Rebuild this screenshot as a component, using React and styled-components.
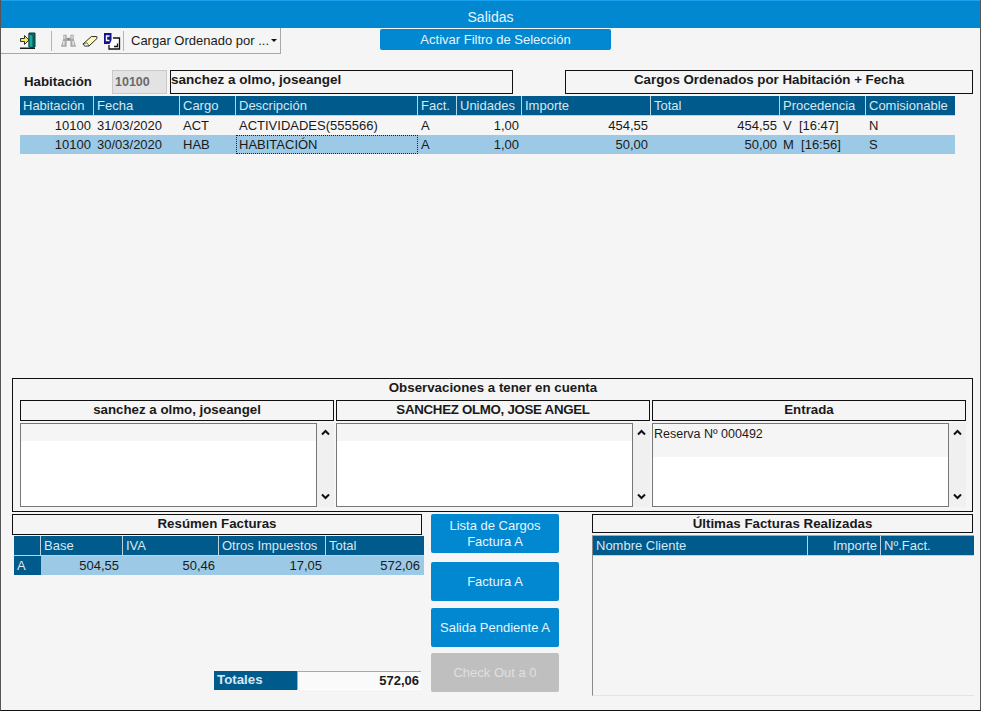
import React from "react";
import styled, { createGlobalStyle } from "styled-components";

const GlobalStyle = createGlobalStyle`
  html, body {
    margin: 0;
    padding: 0;
    background: #f5f5f5;
  }
  * {
    box-sizing: border-box;
  }
`;

const Window = styled.div`
  width: 981px;
  height: 711px;
  display: flex;
  flex-direction: column;
  background: #f5f5f5;
  border-left: 1px solid #555;
  border-right: 1px solid #555;
  border-bottom: 1px solid #111;
  font-family: "Liberation Sans", Arial, sans-serif;
  font-size: 13px;
  color: #1a1a1a;
  overflow: hidden;
`;

const TitleBar = styled.div`
  flex: none;
  height: 28px;
  margin: 0 -1px;
  padding-top: 8px;
  background: #0288d1;
  border-top: 1px solid #19a3f0;
  color: #e8f4fb;
  font-size: 14px;
  line-height: 17px;
  text-align: center;
`;

const TopRow = styled.div`
  flex: none;
  height: 42px;
  display: flex;
  align-items: flex-start;
`;

const Toolbar = styled.div`
  width: 280px;
  height: 26px;
  display: flex;
  align-items: center;
  padding-left: 18px;
  border-right: 1px solid #a8a8a8;
  border-bottom: 1px solid #a8a8a8;
`;

const ToolIcon = styled.svg`
  flex: none;
  width: ${(p) => p.$w || 18}px;
  height: 18px;
  margin-left: ${(p) => p.$gap || 0}px;
`;

const ToolSep = styled.div`
  flex: none;
  width: 1px;
  height: 20px;
  margin-left: ${(p) => p.$gap}px;
  background: #b4b4b4;
`;

const LoadMenu = styled.div`
  display: flex;
  align-items: center;
  margin-left: 7px;
  white-space: nowrap;
`;

const Caret = styled.span`
  width: 0;
  height: 0;
  margin-left: 2px;
  border-left: 3px solid transparent;
  border-right: 3px solid transparent;
  border-top: 3px solid #111;
`;

const FilterButton = styled.div`
  width: 231px;
  height: 21px;
  margin: 1px 0 0 99px;
  display: flex;
  align-items: center;
  justify-content: center;
  border-radius: 2px;
  background: #0288d1;
  color: #e8f4fb;
  font-size: 13px;
`;

const InfoRow = styled.div`
  flex: none;
  height: 26px;
  display: flex;
  align-items: flex-start;
  padding-left: 23px;
`;

const RoomLabel = styled.div`
  width: 88px;
  height: 24px;
  line-height: 24px;
  font-weight: bold;
  font-size: 13.3px;
`;

const RoomInput = styled.div`
  width: 55px;
  height: 24px;
  line-height: 22px;
  padding-left: 2px;
  background: #e3e3e3;
  border: 1px solid #c9c9c9;
  color: #6a6a6a;
  font-size: 12.5px;
  font-weight: bold;
`;

const NameBox = styled.div`
  width: 343px;
  height: 24px;
  margin-left: 3px;
  line-height: 18px;
  border: 1px solid #111;
  font-weight: bold;
  font-size: 13.5px;
`;

const OrderBox = styled.div`
  width: 408px;
  height: 24px;
  margin-left: 52px;
  line-height: 18px;
  border: 1px solid #111;
  font-weight: bold;
  font-size: 13.3px;
  text-align: center;
`;

const Grid = styled.div`
  flex: none;
  display: grid;
  grid-template-columns: ${(p) => p.$cols};
  align-content: start;
  width: ${(p) => p.$width}px;
  margin-left: ${(p) => p.$left || 0}px;
`;

const HeadCell = styled.div`
  height: 20px;
  line-height: 20px;
  padding: 0 3px;
  background: #005a8c;
  color: #d7e8f2;
  border-right: ${(p) => (p.$last ? "none" : "1px solid #b9d3e2")};
  border-bottom: 1px solid #b9d3e2;
  text-align: ${(p) => (p.$right ? "right" : "left")};
  white-space: nowrap;
  overflow: hidden;
`;

const Cell = styled.div`
  height: 19px;
  line-height: 19px;
  padding: 0 3px;
  background: ${(p) => (p.$selected ? "#9ccae6" : "transparent")};
  text-align: ${(p) => (p.$right ? "right" : "left")};
  white-space: pre;
  overflow: hidden;
  outline: ${(p) => (p.$focus ? "1px dotted #222" : "none")};
  outline-offset: -1px;
`;

const Spacer = styled.div`
  flex: none;
  height: 224px;
`;

const ObsPanel = styled.div`
  flex: none;
  height: 134px;
  margin: 0 7px 0 11px;
  padding: 0 6px 0 7px;
  border: 1px solid #111;
  display: flex;
  flex-direction: column;
`;

const ObsTitle = styled.div`
  height: 21px;
  line-height: 18px;
  text-align: center;
  font-weight: bold;
  font-size: 13.3px;
`;

const ObsColumns = styled.div`
  display: grid;
  grid-template-columns: 314px 314px 314px;
  column-gap: 2px;
`;

const SectionHead = styled.div`
  height: 21px;
  line-height: 18px;
  border: 1px solid #111;
  text-align: center;
  font-weight: bold;
  font-size: 13.3px;
  letter-spacing: ${(p) => (p.$tight ? "-0.3px" : "normal")};
`;

const MemoRow = styled.div`
  display: flex;
  height: 84px;
  margin-top: 2px;
`;

const Memo = styled.div`
  flex: 1;
  background: linear-gradient(#f5f5f5 ${(p) => p.$band}px, #fff ${(p) => p.$band}px);
  border: 1px solid #777;
  padding: 2px 1px;
  line-height: 16px;
  font-size: 12.5px;
`;

const ScrollBar = styled.div`
  flex: none;
  width: 17px;
  display: flex;
  flex-direction: column;
  justify-content: space-between;
  align-items: center;
  padding: 6px 0 7px;
  background: #f0f0f0;
`;

const Chevron = styled.svg`
  width: 9px;
  height: 7px;
`;

const BottomRow = styled.div`
  flex: 1;
  display: flex;
  margin-top: 2px;
  min-height: 0;
  padding-left: 11px;
`;

const SummaryColumn = styled.div`
  flex: none;
  width: 412px;
  display: flex;
  flex-direction: column;
`;

const SummaryHead = styled(SectionHead)`
  width: 410px;
  margin-bottom: 1px;
`;

const SideCell = styled(Cell)`
  background: #005a8c;
  color: #d7e8f2;
`;

const SummaryCell = styled(Cell)`
  padding-right: 4px;
`;

const TotalsRow = styled.div`
  display: flex;
  height: 19px;
  margin: 96px 0 0 202px;
`;

const TotalsLabel = styled.div`
  width: 83px;
  padding-left: 3px;
  line-height: 18px;
  background: #005a8c;
  color: #d7e8f2;
  font-weight: bold;
  font-size: 13.3px;
`;

const TotalsValue = styled.div`
  width: 124px;
  padding-right: 2px;
  line-height: 17px;
  background: #fafafa;
  border-top: 1px solid #a8a8a8;
  border-left: 1px solid #a8a8a8;
  border-bottom: 1px solid #fff;
  text-align: right;
  font-weight: bold;
`;

const ActionColumn = styled.div`
  flex: none;
  width: 128px;
  margin-left: 7px;
  display: flex;
  flex-direction: column;
`;

const ActionButton = styled.div`
  height: 39px;
  margin-top: ${(p) => p.$gap || 0}px;
  display: flex;
  align-items: center;
  justify-content: center;
  text-align: center;
  line-height: 16px;
  border-radius: 2px;
  background: ${(p) => (p.$disabled ? "#bfbfbf" : "#0288d1")};
  color: ${(p) => (p.$disabled ? "#e0e0e0" : "#e8f4fb")};
`;

const InvoiceColumn = styled.div`
  flex: none;
  width: 382px;
  margin-left: 33px;
  display: flex;
  flex-direction: column;
`;

const InvoiceHead = styled(SectionHead)`
  width: 381px;
  height: 19px;
  line-height: 17px;
  margin-bottom: 2px;
`;

const InvoiceBody = styled.div`
  width: 382px;
  height: 161px;
  border-left: 1px solid #8a8a8a;
  border-bottom: 1px solid #e4e4e4;
  border-top: 1px solid #aaa;
`;

const chargeCols = "74px 86px 56px 182px 39px 65px 129px 129px 86px 89px";
const chargeHeads = ["Habitación", "Fecha", "Cargo", "Descripción", "Fact.", "Unidades", "Importe", "Total", "Procedencia", "Comisionable"];
const chargeRows = [
  ["10100", "31/03/2020", "ACT", "ACTIVIDADES(555566)", "A", "1,00", "454,55", "454,55", "V  [16:47]", "N"],
  ["10100", "30/03/2020", "HAB", "HABITACIÓN", "A", "1,00", "50,00", "50,00", "M  [16:56]", "S"],
];
const rightCols = [0, 5, 6, 7];

const DoorIcon = () => (
  <ToolIcon viewBox="0 0 18 18" $w={18}>
    <path d="M10 1h6v14h-6z" fill="#0b6f6c" stroke="#063a3a" />
    <path d="M10 1.500l4 2V16l-4-1.500z" fill="#15aaa4" stroke="#063a3a" strokeWidth=".8" />
    <path d="M1.500 6.500h4V3.500l4.500 4.500-4.500 4.500v-3h-4z" fill="#ffec4f" stroke="#1c1c1c" strokeWidth=".9" />
    <path d="M1 15.500h15V17H1z" fill="#1c1c1c" />
  </ToolIcon>
);

const BinocularsIcon = () => (
  <ToolIcon viewBox="0 0 18 18" $w={17} $gap={8}>
    <path d="M3.500 2.500h3.500v3h4v-3h3.500v4l2.500 8.500h-6v-6H7v6H1l2.500-8.500z" fill="#a8a8a8" />
    <path d="M4 3.500h1.500v3H4zM12 3.500h1.500v3H12zM3 9h2v4.500H3zM13 9h2v4.500h-2z" fill="#dedede" />
    <path d="M8 6h2v2H8z" fill="#7d7d7d" />
  </ToolIcon>
);

const EraserIcon = () => (
  <ToolIcon viewBox="0 0 18 18" $w={16} $gap={5}>
    <path d="M1 12.500L10.500 4H16.500L17 6 8 14.500H3z" fill="#fffbb5" stroke="#111" />
    <path d="M1.500 12.500l2 2h4.500l-2.500-3.500z" fill="#fff" stroke="#111" strokeWidth=".7" />
  </ToolIcon>
);

const CopyIcon = () => (
  <ToolIcon viewBox="0 0 18 18" $w={18} $gap={5}>
    <path d="M1 1h7.500v11H1z" fill="#12128c" />
    <path d="M6.500 4H3.500v4.500h3" fill="none" stroke="#fff" strokeWidth="1.400" />
    <path d="M10 6h6.500v11H6v-4" fill="#fff" stroke="#111" strokeWidth="1.300" />
    <path d="M11 14.500h3.500v-3" fill="none" stroke="#111" strokeWidth="1.300" />
  </ToolIcon>
);

const Scroll = () => (
  <ScrollBar>
    <Chevron viewBox="0 0 9 7">
      <path d="M1 5.500l3.500-3.500 3.500 3.500" fill="none" stroke="#111" strokeWidth="2" />
    </Chevron>
    <Chevron viewBox="0 0 9 7">
      <path d="M1 1.500l3.500 3.500 3.500-3.500" fill="none" stroke="#111" strokeWidth="2" />
    </Chevron>
  </ScrollBar>
);

const App = () => {
  return (
    <Window>
      <GlobalStyle />
      <TitleBar>Salidas</TitleBar>
      <TopRow>
        <Toolbar>
          <DoorIcon />
          <ToolSep $gap={14} />
          <BinocularsIcon />
          <EraserIcon />
          <CopyIcon />
          <ToolSep $gap={2} />
          <LoadMenu>
            Cargar Ordenado por ...
            <Caret />
          </LoadMenu>
        </Toolbar>
        <FilterButton>Activar Filtro de Selección</FilterButton>
      </TopRow>
      <InfoRow>
        <RoomLabel>Habitación</RoomLabel>
        <RoomInput>10100</RoomInput>
        <NameBox>sanchez a olmo, joseangel</NameBox>
        <OrderBox>Cargos Ordenados por Habitación + Fecha</OrderBox>
      </InfoRow>
      <Grid $cols={chargeCols} $width={935} $left={19}>
        {chargeHeads.map((h, i) => (
          <HeadCell key={h} $last={i === chargeHeads.length - 1}>{h}</HeadCell>
        ))}
        {chargeRows.map((row, r) =>
          row.map((value, c) => (
            <Cell
              key={`${r}-${c}`}
              $right={rightCols.includes(c)}
              $selected={r === 1}
              $focus={r === 1 && c === 3}
            >
              {value}
            </Cell>
          ))
        )}
      </Grid>
      <Spacer />
      <ObsPanel>
        <ObsTitle>Observaciones a tener en cuenta</ObsTitle>
        <ObsColumns>
          <SectionHead>sanchez a olmo, joseangel</SectionHead>
          <SectionHead $tight>SANCHEZ OLMO, JOSE ANGEL</SectionHead>
          <SectionHead>Entrada</SectionHead>
          <MemoRow>
            <Memo $band={17} />
            <Scroll />
          </MemoRow>
          <MemoRow>
            <Memo $band={17} />
            <Scroll />
          </MemoRow>
          <MemoRow>
            <Memo $band={33}>Reserva Nº 000492</Memo>
            <Scroll />
          </MemoRow>
        </ObsColumns>
      </ObsPanel>
      <BottomRow>
        <SummaryColumn>
          <SummaryHead>Resúmen Facturas</SummaryHead>
          <Grid $cols="27px 82px 96px 107px 98px" $width={410} $left={2}>
            <HeadCell />
            <HeadCell>Base</HeadCell>
            <HeadCell>IVA</HeadCell>
            <HeadCell>Otros Impuestos</HeadCell>
            <HeadCell $last>Total</HeadCell>
            <SideCell>A</SideCell>
            <SummaryCell $selected $right>504,55</SummaryCell>
            <SummaryCell $selected $right>50,46</SummaryCell>
            <SummaryCell $selected $right>17,05</SummaryCell>
            <SummaryCell $selected $right>572,06</SummaryCell>
          </Grid>
          <TotalsRow>
            <TotalsLabel>Totales</TotalsLabel>
            <TotalsValue>572,06</TotalsValue>
          </TotalsRow>
        </SummaryColumn>
        <ActionColumn>
          <ActionButton>Lista de Cargos<br />Factura A</ActionButton>
          <ActionButton $gap={9}>Factura A</ActionButton>
          <ActionButton $gap={7}>Salida Pendiente A</ActionButton>
          <ActionButton $gap={6} $disabled>Check Out a 0</ActionButton>
        </ActionColumn>
        <InvoiceColumn>
          <InvoiceHead>Últimas Facturas Realizadas</InvoiceHead>
          <InvoiceBody>
            <Grid $cols="215px 73px 93px" $width={381}>
              <HeadCell>Nombre Cliente</HeadCell>
              <HeadCell $right>Importe</HeadCell>
              <HeadCell $last>Nº.Fact.</HeadCell>
            </Grid>
          </InvoiceBody>
        </InvoiceColumn>
      </BottomRow>
    </Window>
  );
};

export default App;
